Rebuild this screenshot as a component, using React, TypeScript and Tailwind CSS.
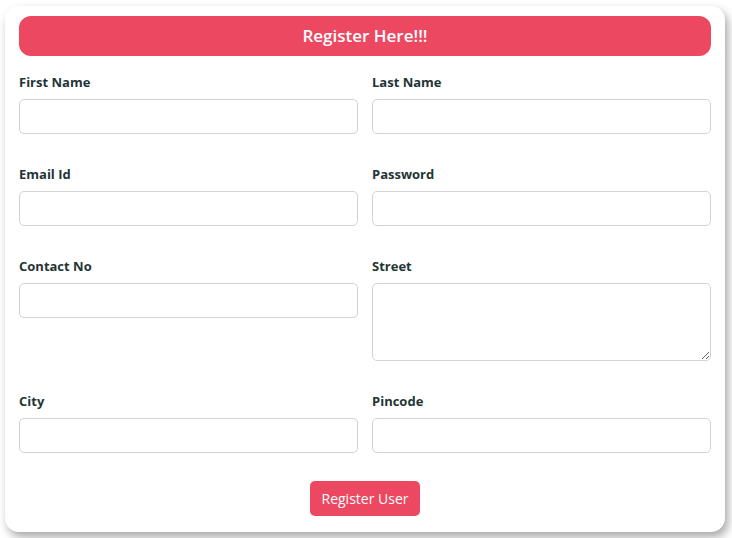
import React from 'react';

const FIELDS_LEFT_RIGHT: [string, string][] = [
  ['First Name', 'Last Name'],
  ['Email Id', 'Password'],
];

function Field({ label, area }: { label: string; area?: boolean }) {
  return (
    <div className="flex flex-col">
      <label className="text-[13px] leading-[20px] font-bold text-[#1f3536] mb-[7px]">{label}</label>
      {area ? (
        <textarea className="h-[78px] w-full rounded-[5px] border border-[#ced4da] bg-white outline-none resize-y" />
      ) : (
        <input type="text" className="h-[35px] w-full rounded-[5px] border border-[#ced4da] bg-white outline-none px-3" />
      )}
    </div>
  );
}

export default function App() {
  return (
    <div className="w-[732px] h-[538px] bg-white overflow-hidden pt-[6px] pl-[5px]" style={{ fontFamily: '"Open Sans", "Noto Sans", sans-serif' }}>
      <div className="w-[720px] h-[526px] bg-white rounded-[14px] shadow-[3px_5px_10px_rgba(0,0,0,0.35)] px-[14px] pt-[10px] flex flex-col">
        <div className="h-[40px] rounded-[12px] bg-[#ec4862] flex items-center justify-center text-white font-semibold text-[17px]">
          Register Here!!!
        </div>

        <div className="grid grid-cols-2 gap-x-[14px] mt-[16px]">
          {FIELDS_LEFT_RIGHT.map(([a, b]) => (
            <React.Fragment key={a}>
              <div className="mb-[30px]"><Field label={a} /></div>
              <div className="mb-[30px]"><Field label={b} /></div>
            </React.Fragment>
          ))}
          <div className="mb-[30px]"><Field label="Contact No" /></div>
          <div className="mb-[30px]"><Field label="Street" area /></div>
          <div><Field label="City" /></div>
          <div><Field label="Pincode" /></div>
        </div>

        <div className="flex justify-center mt-[28px]">
          <button className="h-[35px] px-3 rounded-[5px] bg-[#ec4862] text-white text-[14px]">Register User</button>
        </div>
      </div>
    </div>
  );
}
